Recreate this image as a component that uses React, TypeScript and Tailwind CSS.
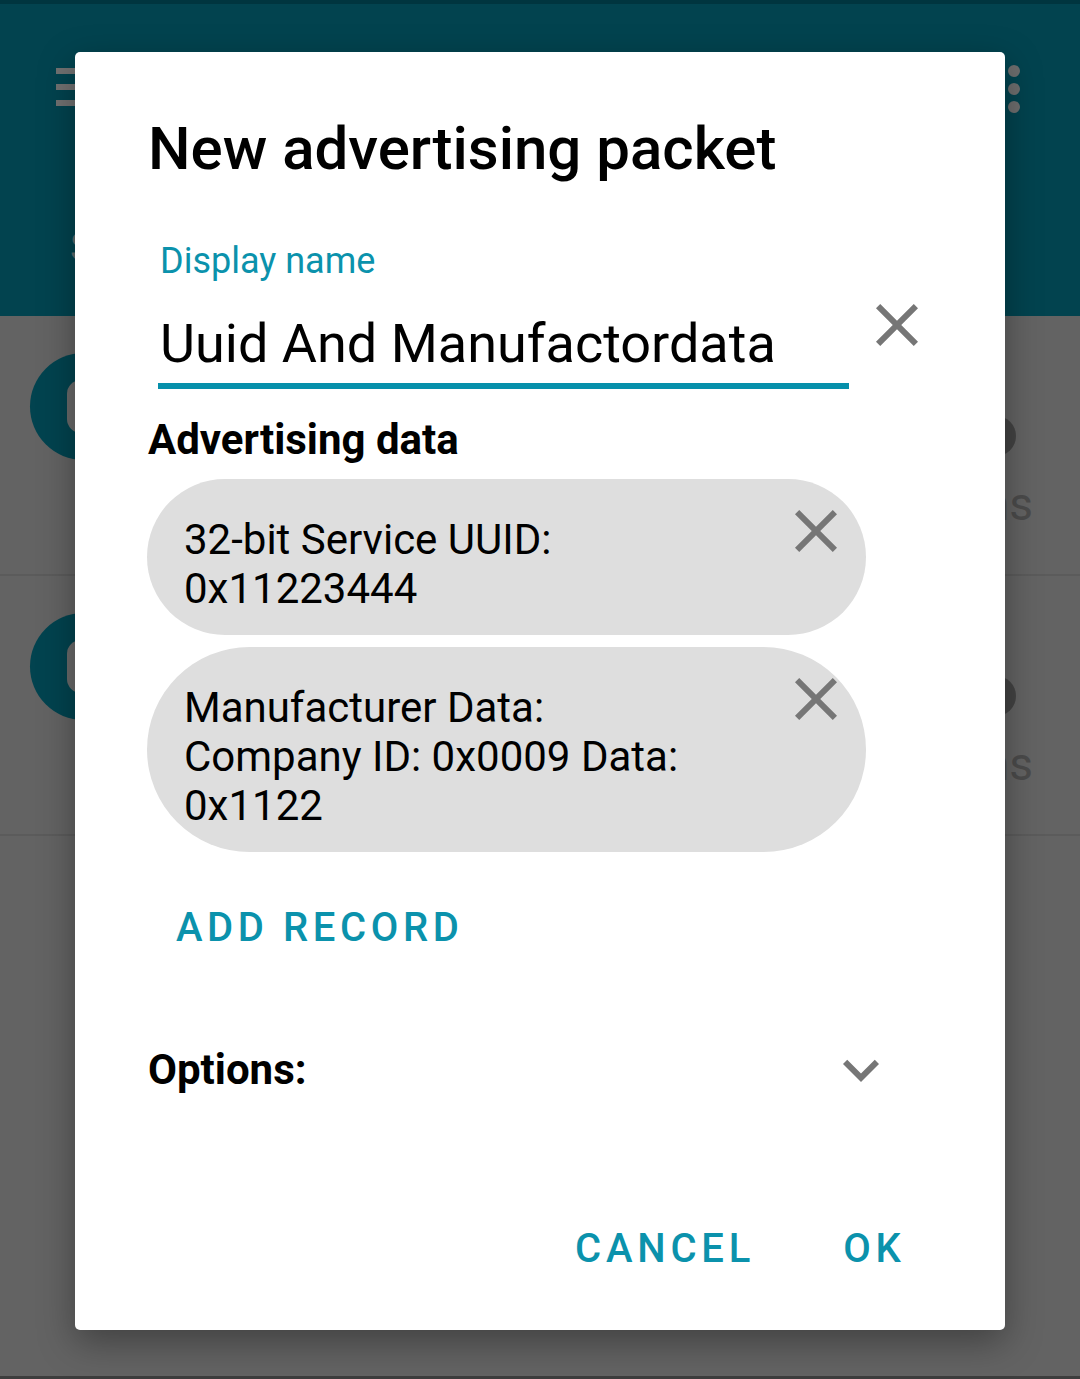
import React from "react";

interface AdRecord {
	id: number;
	lines: string[];
}

const records: AdRecord[] = [
	{ id: 1, lines: ["32-bit Service UUID:", "0x11223444"] },
	{ id: 2, lines: ["Manufacturer Data:", "Company ID: 0x0009 Data:", "0x1122"] },
];

// Material "close" icon, 24 unit grid
const CloseIcon = () => (
	<svg width="72" height="72" viewBox="0 0 24 24" className="shrink-0">
		<path
			fill="#767676"
			d="M19 6.41L17.59 5 12 10.59 6.41 5 5 6.41 10.59 12 5 17.59 6.41 19 12 13.41 17.59 19 19 17.59 13.41 12z"
		/>
	</svg>
);

// Material "expand_more" icon
const ExpandIcon = () => (
	<svg width="72" height="72" viewBox="0 0 24 24" className="shrink-0">
		<path fill="#767676" d="M16.59 8.59L12 13.17 7.41 8.59 6 10l6 6 6-6z" />
	</svg>
);

// Dimmed list row sitting behind the dialog
const ListRow = () => (
	<div className="h-[260px] border-b-2 border-[#5b5b5b] flex justify-between">
		<div className="pl-[30px] pt-[37px]">
			<div className="w-[107px] h-[107px] rounded-full bg-[#02434f] flex items-center justify-center">
				<div className="w-[40px] h-[53px] rounded-[14px] bg-[#6a6a6a] ml-[6px]"></div>
			</div>
		</div>
		<div className="flex flex-col items-end pr-[47px] pt-[100px]">
			<div className="w-[40px] h-[40px] rounded-full bg-[#434343] mr-[17px]"></div>
			<p className="mt-[21px] text-[46px] leading-[54px] text-[#4b4b4b]">100 ms</p>
		</div>
	</div>
);

const App: React.FunctionComponent = () => {
	return (
		<div className="relative w-[1080px] h-[1379px] overflow-hidden bg-[#636363] font-['Roboto',sans-serif] flex flex-col">
			{/* Background screen under the scrim */}
			<div className="h-[4px] bg-[#00353f]"></div>
			<div className="h-[312px] bg-[#02434f] flex justify-between pl-[56px] pr-[60px] pt-[64px]">
				<div className="flex flex-col">
					<div className="flex flex-col gap-[10px]">
						<div className="w-[24px] h-[6px] bg-[#717171]"></div>
						<div className="w-[24px] h-[6px] bg-[#717171]"></div>
						<div className="w-[24px] h-[6px] bg-[#717171]"></div>
					</div>
					<p className="mt-[120px] ml-[14px] text-[40px] leading-[44px] text-[#5d6a6c]">Scan</p>
				</div>
				<div className="flex flex-col gap-[6px] -mt-[3px]">
					<div className="w-[12px] h-[12px] rounded-full bg-[#6e6e6e]"></div>
					<div className="w-[12px] h-[12px] rounded-full bg-[#6e6e6e]"></div>
					<div className="w-[12px] h-[12px] rounded-full bg-[#6e6e6e]"></div>
				</div>
			</div>
			<ListRow />
			<ListRow />
			<div className="mt-auto h-[3px] bg-[#3d3d3d]"></div>

			{/* Dialog */}
			<div className="absolute left-[75px] top-[52px] w-[930px] h-[1278px] bg-white rounded-[5px] shadow-[0_12px_36px_rgba(0,0,0,0.35)] pl-[73px] text-black">
				<h1 className="pt-[62px] text-[60px] leading-[70px] font-medium">New advertising packet</h1>

				<p className="mt-[57px] ml-[12px] text-[36px] leading-[40px] text-[#0b92ac]">Display name</p>
				<div className="flex items-start">
					<div className="ml-[10px] w-[691px] pt-[32px]">
						<p className="pl-[2px] text-[54px] leading-[62px] whitespace-nowrap">Uuid And Manufactordata</p>
						<div className="mt-[8px] h-[6px] bg-[#0690ab]"></div>
					</div>
					<div className="ml-[12px] mt-[8px]">
						<CloseIcon />
					</div>
				</div>

				<h2 className="mt-[26px] text-[42px] leading-[50px] font-bold">Advertising data</h2>
				<div className="mt-[14px] -ml-[1px] w-[719px] flex flex-col gap-[12px]">
					{records.map((rec) => (
						<div key={rec.id} className="flex items-start rounded-full bg-[#dedede] pl-[37px] pr-[14px] pt-[16px] pb-[22px]">
							<div className="flex-1 mt-[20px] text-[42px] leading-[49px]">
								{rec.lines.map((line, i) => (
									<p key={i} className="whitespace-nowrap">{line}</p>
								))}
							</div>
							<CloseIcon />
						</div>
					))}
				</div>

				<button className="block mt-[52px] ml-[28px] text-[40px] leading-[47px] font-medium tracking-[0.115em] text-[#0b92ac]">
					ADD RECORD
				</button>

				<div className="mt-[94px] w-[749px] h-[50px] flex items-center justify-between">
					<p className="text-[42px] leading-[50px] font-bold">Options:</p>
					<ExpandIcon />
				</div>

				<div className="mt-[130px] flex pl-[427px] gap-[88px] text-[40px] leading-[47px] font-medium tracking-[0.12em] text-[#0b92ac]">
					<button>CANCEL</button>
					<button>OK</button>
				</div>
			</div>
		</div>
	);
};

export default App;
